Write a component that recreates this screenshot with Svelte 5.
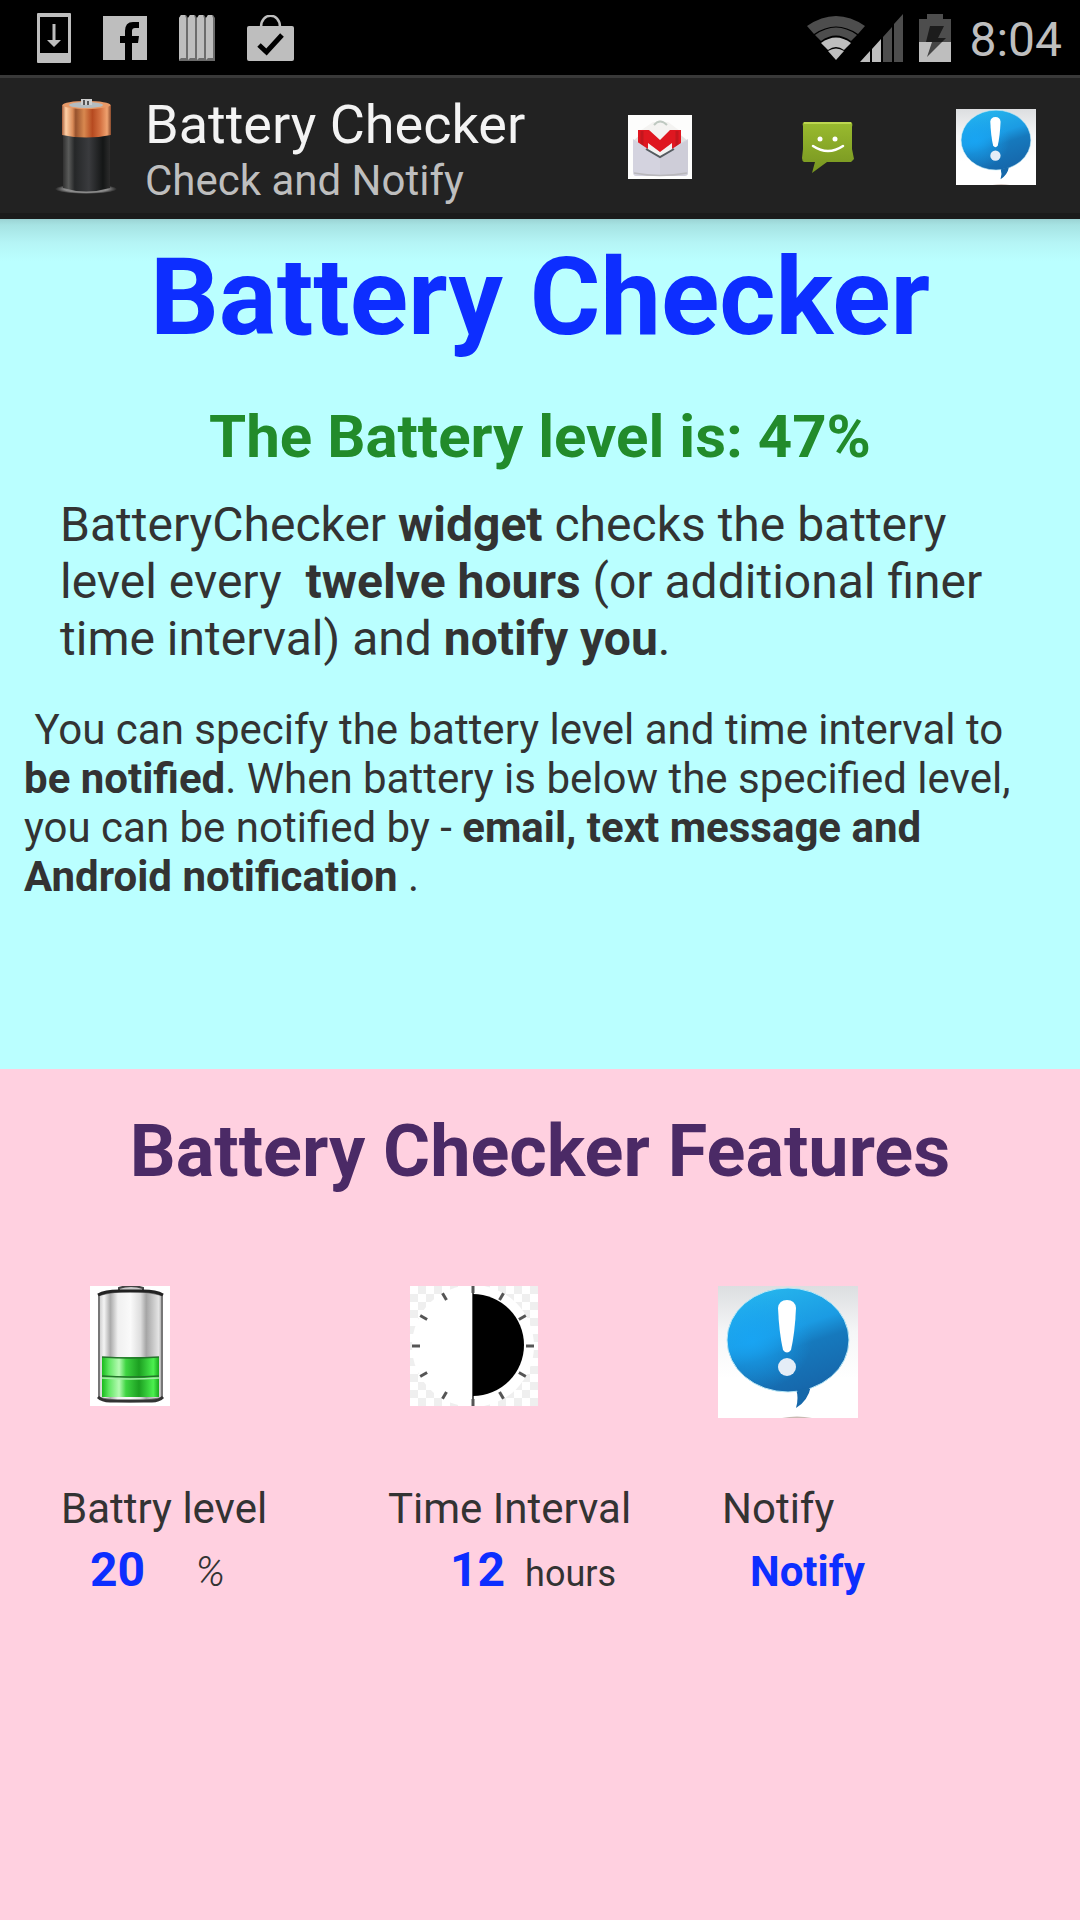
<script>
  const battery = { level: 47, threshold: 20, hours: 12 };
  const ticks = [0, 30, 60, 90, 120, 150, 180, 210, 240, 270, 300, 330];
</script>

{#snippet bubble(id)}
  <svg class="art" viewBox="0 0 140 132" preserveAspectRatio="none" aria-hidden="true">
    <defs>
      <linearGradient id="{id}-bg" x1="0" y1="0" x2="0" y2="1">
        <stop offset="0" stop-color="#dcdee0" /><stop offset=".35" stop-color="#f5f6f7" /><stop offset=".7" stop-color="#fff" />
      </linearGradient>
      <linearGradient id="{id}-fill" x1=".2" y1="0" x2=".6" y2="1">
        <stop offset="0" stop-color="#27b8ee" /><stop offset=".45" stop-color="#1b9be3" /><stop offset=".62" stop-color="#1679bd" /><stop offset="1" stop-color="#1667ab" />
      </linearGradient>
      <radialGradient id="{id}-glow" cx=".2" cy=".5" r=".5">
        <stop offset="0" stop-color="#18a5f4" stop-opacity=".9" /><stop offset="1" stop-color="#18a5f4" stop-opacity="0" />
      </radialGradient>
    </defs>
    <rect width="140" height="132" fill="url(#{id}-bg)" />
    <path d="M78 100 H93 Q90 115 78 122 Q81 112 78 103 Z" fill="#1668aa" />
    <ellipse cx="70" cy="54" rx="61" ry="52" fill="url(#{id}-fill)" stroke="#b9e8f7" stroke-width="1" />
    <ellipse cx="70" cy="54" rx="60" ry="51" fill="url(#{id}-glow)" />
    <path d="M79 104 L92 101 Q89 112 82 117 Z" fill="#1668aa" />
    <path d="M60 22 Q61 14 69 14 Q77 14 78 22 Q77 46 73 64 Q69 69 65 64 Q61 46 60 22 Z" fill="#fff" />
    <circle cx="69" cy="81" r="9" fill="#e4edf7" />
    <path d="M64 132 Q79 129 94 132 Z" fill="#c9b9b2" />
  </svg>
{/snippet}

<div class="screen">
  <header class="status">
    <div class="notices">
      <svg width="34" height="50" viewBox="0 0 34 50" aria-hidden="true">
        <path d="M1 0H33Q34 0 34 1V49Q34 50 33 50H1Q0 50 0 49V1Q0 0 1 0ZM3 4V40H31V4Z" fill="#bebebe" fill-rule="evenodd" />
        <path d="M15.500 11H18.500V27H24L17 34L10 27H15.500Z" fill="#bebebe" />
      </svg>
      <svg width="44" height="44" viewBox="0 0 44 44" aria-hidden="true">
        <path d="M0 0H44V44H29V27H35L36 20H29V15Q29 12 32 12H36V6H30Q22 6 22 15V20H17V27H22V44H0Z" fill="#bebebe" />
      </svg>
      <svg width="36" height="46" viewBox="0 0 36 46" aria-hidden="true">
        {#each [0, 9, 18, 27] as x}
          <path d="M{x} 3L{x + 2} 0H{x + 7}L{x + 9} 3V46H{x}Z" fill="#6c6c6c" />
          <path d="M{x} 3L{x + 2} 0H{x + 6}L{x + 7} 3V43H{x + 2}L{x} 45Z" fill="#bebebe" />
        {/each}
      </svg>
      <svg width="48" height="46" viewBox="0 0 48 46" aria-hidden="true">
        <path d="M14 12C14 -3 33 -3 33 12" fill="none" stroke="#bebebe" stroke-width="2.500" />
        <rect y="11" width="47" height="35" rx="2" fill="#bebebe" />
        <path d="M12 30L19.500 37L35 20" fill="none" stroke="#000" stroke-width="5" />
      </svg>
    </div>
    <div class="system">
      <svg class="wifi" width="58" height="44" viewBox="0 0 58 44" aria-hidden="true">
        <path d="M0 10Q29 -10 58 10L51 18Q29 3 7 18Z" fill="#4d4d4d" />
        <path d="M8 19Q29 4 50 19L44 25Q29 14 14 25Z" fill="#4d4d4d" />
        <path d="M14 27Q29 16 44 27L37 34Q29 28 21 34Z" fill="#bebebe" />
        <path d="M21 35Q29 30 37 35L29 44Z" fill="#bebebe" />
      </svg>
      <svg class="signal" width="43" height="48" viewBox="0 0 43 48" aria-hidden="true">
        <path d="M0 48L10 37V48ZM12 35L21 25V48H12Z" fill="#bebebe" />
        <path d="M23 23L32 13V48H23ZM34 10L43 0V48H34Z" fill="#4d4d4d" />
      </svg>
      <svg class="charge" width="32" height="48" viewBox="0 0 32 48" aria-hidden="true">
        <path d="M8 0H24V5H32V28H0V5H8Z" fill="#4d4d4d" /><path d="M0 28H32V48H0Z" fill="#bebebe" />
        <path d="M11 12H25L19 24H27L23 28H7Z" fill="#1c1c1c" /><path d="M13 28H23L8 43Z" fill="#454545" />
      </svg>
      <time>8:04</time>
    </div>
  </header>

  <nav class="bar">
    <svg class="logo" width="62" height="96" viewBox="0 0 62 96" aria-hidden="true">
      <defs>
        <linearGradient id="copper"><stop offset="0" stop-color="#a75f3c" /><stop offset=".08" stop-color="#ffd0a6" /><stop offset=".22" stop-color="#d98b58" /><stop offset=".28" stop-color="#97522d" /><stop offset=".45" stop-color="#d8884f" /><stop offset=".62" stop-color="#b64a20" /><stop offset=".78" stop-color="#d37040" /><stop offset=".92" stop-color="#efa26f" /><stop offset="1" stop-color="#8a4a2c" /></linearGradient>
        <linearGradient id="dark"><stop offset="0" stop-color="#303030" /><stop offset=".12" stop-color="#5a5b5a" /><stop offset=".25" stop-color="#252728" /><stop offset=".55" stop-color="#3a3b3e" /><stop offset=".85" stop-color="#141616" /><stop offset="1" stop-color="#2c2c2c" /></linearGradient>
        <radialGradient id="floor"><stop offset=".7" stop-color="#8a8a8a" /><stop offset="1" stop-color="#8a8a8a" stop-opacity="0" /></radialGradient>
      </defs>
      <ellipse cx="31" cy="90" rx="31" ry="5" fill="url(#floor)" />
      <path d="M8 36V89Q31 96 55 89V36Z" fill="url(#dark)" />
      <path d="M7 6V36Q31 41 56 36V6Z" fill="url(#copper)" />
      <ellipse cx="31.500" cy="6" rx="24" ry="4" fill="#e79a68" />
      <ellipse cx="31" cy="6" rx="17" ry="3" fill="#b3bcc0" />
      <path d="M26 0H37V6H26Z" fill="#cecfcf" /><path d="M29 1V6M33 2V6" stroke="#555" stroke-width="2" />
    </svg>
    <div class="titles">
      <div class="title">Battery Checker</div>
      <div class="subtitle">Check and Notify</div>
    </div>
    <div class="actions">
      <button class="mail" aria-label="Email">
        <svg class="art" viewBox="0 0 64 64" aria-hidden="true">
          <rect width="64" height="64" fill="#fdfdfc" />
          <path d="M5 26L26 8Q32 3 38 8L60 26L58 60H6Z" fill="#e3e3e1" />
          <path d="M12 16L25 7H40L52 16V30L32 42L12 30Z" fill="#f4f3f1" />
          <path d="M26 10Q32 3 39 10" fill="none" stroke="#bfc9c1" stroke-width="2" />
          <path d="M10 15H21L32 25L42 15H53V33L44 37V28L32 37L20 28V36L10 31Z" fill="#df1720" />
          <path d="M14 16V32M49 16V33" stroke="#a9161c" stroke-width="3" opacity=".5" />
          <path d="M5 24L11 28L32 42L53 28L60 24V58Q60 61 56 61H8Q5 61 5 57Z" fill="#d4d3df" />
          <path d="M32 42L60 25V58Q60 61 56 61H32Z" fill="#cac9d4" opacity=".6" />
          <path d="M18 34L32 42L46 34" fill="none" stroke="#555c60" stroke-width="2" />
          <path d="M6 58Q32 63 59 58" fill="none" stroke="#b9b8bc" stroke-width="1.500" />
        </svg>
      </button>
      <button class="sms" aria-label="Text message">
        <svg class="art" viewBox="0 0 53 52" aria-hidden="true">
          <defs><linearGradient id="lime" x1="0" y1="0" x2="0" y2="1"><stop offset="0" stop-color="#9abb2f" /><stop offset="1" stop-color="#769420" /></linearGradient></defs>
          <path d="M3 1H50Q52 2 51 6V28L53 38L50 41H26L11 52L14 41H3Q1 40 1 37L2 28V5Q1 2 3 1Z" fill="url(#lime)" />
          <path d="M3 2H50" stroke="#bdd650" stroke-width="2" />
          <circle cx="19" cy="18" r="2.500" fill="#fff" /><circle cx="34" cy="18" r="2.500" fill="#fff" />
          <path d="M12 25Q27 35 42 25" fill="none" stroke="#fff" stroke-width="2.500" stroke-linecap="round" />
        </svg>
      </button>
      <button class="alert" aria-label="Notification">{@render bubble('top')}</button>
    </div>
  </nav>

  <main>
    <section class="intro">
      <h1>Battery Checker</h1>
      <p class="level">The Battery level is: {battery.level}%</p>
      <p class="lead">BatteryChecker <b>widget</b> checks the battery level every &nbsp;<b>twelve hours</b> (or additional finer time interval) and <b>notify you</b>.</p>
      <p class="detail">&nbsp;You can specify the battery level and time interval to <b>be notified</b>. When battery is below the specified level, you can be notified by - <b>email, text message and Android notification</b> .</p>
    </section>

    <section class="features">
      <h2>Battery Checker Features</h2>
      <div class="grid">
        <div class="feature">
          <div class="picture cell">
            <svg class="art" viewBox="0 0 80 120" aria-hidden="true">
              <defs>
                <linearGradient id="steel"><stop offset="0" stop-color="#c9c9c9" /><stop offset=".08" stop-color="#f4f4f4" /><stop offset=".18" stop-color="#aaa" /><stop offset=".3" stop-color="#f0f0f0" /><stop offset=".5" stop-color="#fafafa" /><stop offset=".66" stop-color="#ddd" /><stop offset=".75" stop-color="#a5a5a5" /><stop offset=".95" stop-color="#e5e5e5" /><stop offset="1" stop-color="#999" /></linearGradient>
                <linearGradient id="green"><stop offset="0" stop-color="#18bb1c" /><stop offset=".12" stop-color="#5fe661" /><stop offset=".3" stop-color="#b6fbb3" /><stop offset=".42" stop-color="#3fd542" /><stop offset=".65" stop-color="#1c9f21" /><stop offset=".9" stop-color="#4cf04f" /><stop offset="1" stop-color="#19a91d" /></linearGradient>
              </defs>
              <rect width="80" height="120" fill="#fff" />
              <path d="M9 9Q40 1 72 9V112Q40 119 9 112Z" fill="url(#steel)" stroke="#777" stroke-width="2" />
              <path d="M29 5V2Q41 -2 53 2V5Z" fill="#c9c9c9" stroke="#444" stroke-width="2" />
              <path d="M8 9Q15 5 29 5H53Q66 5 73 9" fill="none" stroke="#222" stroke-width="3" />
              <rect x="12" y="71" width="57" height="40" fill="url(#green)" />
              <path d="M12 71Q40 73 69 71M12 90Q40 92 69 90" fill="none" stroke="#23742a" stroke-width="1.500" />
              <path d="M12 92Q40 94 69 92" fill="none" stroke="#a5eca6" stroke-width="1.500" />
              <path d="M8 111Q12 115 20 115H62Q69 115 73 111" fill="none" stroke="#333" stroke-width="3" />
            </svg>
          </div>
          <div class="label">Battry level</div>
          <div class="value"><strong>{battery.threshold}</strong><em>%</em></div>
        </div>
        <div class="feature timing">
          <div class="picture clock">
            <svg class="art" viewBox="0 0 128 120" aria-hidden="true">
              <defs><pattern id="check" width="16" height="16" patternUnits="userSpaceOnUse"><path d="M8 0H16V8H8ZM0 8H8V16H0Z" fill="#efefef" /></pattern></defs>
              <rect width="128" height="120" fill="#fff" /><rect width="128" height="120" fill="url(#check)" />
              <circle cx="63" cy="60" r="61" fill="#fff" />
              <g stroke="#555" stroke-width="3">
                {#each ticks as angle}<path d="M63 -1V7" transform="rotate({angle} 63 60)" />{/each}
                <path d="M63 0V120" stroke-width="2" />
              </g>
              <path d="M63 8A51 51 0 0 1 63 110Z" fill="#000" />
            </svg>
          </div>
          <div class="label">Time Interval</div>
          <div class="value"><strong>{battery.hours}</strong><span>hours</span></div>
        </div>
        <div class="feature notify">
          <div class="picture speech">{@render bubble('feature')}</div>
          <div class="label">Notify</div>
          <div class="value"><button class="link">Notify</button></div>
        </div>
      </div>
    </section>
  </main>
</div>

<style>
  :global(body) { margin: 0; background: #ffd0e0; }
  .screen {
    min-height: 100vh;
    display: flex;
    flex-direction: column;
    font-family: Roboto, sans-serif;
    color: #333;
  }
  button { border: 0; padding: 0; background: none; font: inherit; cursor: pointer; }
  svg { display: block; flex: none; }
  .art { width: 100%; height: 100%; }
  .status {
    height: 75px;
    box-sizing: border-box;
    display: flex;
    align-items: center;
    justify-content: space-between;
    padding: 0 18px 0 37px;
    background: #000;
    color: #bebebe;
  }
  .notices { display: flex; align-items: center; gap: 32px; }
  .system { display: flex; align-items: center; }
  .signal { margin-right: 16px; margin-left: -5px; }
  .charge { margin-right: 18px; }
  time { padding-top: 4px; font-size: 48px; line-height: 60px; }
  .bar {
    height: 144px;
    box-sizing: border-box;
    display: flex;
    align-items: center;
    padding: 2px 44px 0 55px;
    border-top: 3px solid #393939;
    border-bottom: 6px solid #1b1b1b;
    background: #222;
  }
  .titles { padding-top: 8px; margin-left: 28px; flex: 1; white-space: nowrap; }
  .title { font-size: 54px; line-height: 60px; color: #f3f3f3; }
  .subtitle { font-size: 42px; line-height: 52px; color: #bebebe; }
  .actions { display: flex; align-items: center; }
  .mail { width: 64px; height: 64px; margin-right: 109px; }
  .sms { width: 53px; height: 52px; margin-right: 102px; }
  .alert { width: 80px; height: 76px; }
  main { flex: 1; display: flex; flex-direction: column; }
  h1, h2, p { margin: 0; }
  .intro {
    min-height: 850px;
    box-sizing: border-box;
    padding: 14px 24px 24px;
    background: linear-gradient(#9bd3d4, #a6e3e3 6px, #b5f5f6 24px, #baffff 42px);
  }
  h1 { font-size: 108px; line-height: 128px; text-align: center; color: #0d2eff; }
  .level { margin-top: 41px; font-size: 60px; line-height: 70px; font-weight: 700; text-align: center; color: #228b2b; }
  .lead { margin: 24px 36px 0; font-size: 48px; line-height: 57px; }
  .detail { margin-top: 38px; font-size: 42px; line-height: 49px; }
  .features { flex: 1; padding-top: 41px; background: #ffd0e0; }
  h2 { font-size: 72px; line-height: 84px; text-align: center; color: #4b2a66; }
  .grid { display: grid; grid-template-columns: 327fr 330fr 362fr; padding-left: 61px; margin-top: 92px; }
  .picture { height: 120px; }
  .cell { width: 80px; margin-left: 29px; }
  .clock { width: 128px; margin-left: 22px; }
  .speech { width: 140px; height: 132px; }
  .feature { display: grid; grid-template-rows: 198px 50px 68px; white-space: nowrap; }
  .label { font-size: 42px; line-height: 50px; }
  .notify .label { margin-left: 4px; }
  .value { display: flex; align-items: baseline; padding: 7px 0 0 29px; line-height: 58px; font-size: 36px; color: #333; }
  .timing .value { padding-left: 62px; gap: 20px; }
  .notify .value { padding: 9px 0 0 32px; }
  strong { font-size: 48px; color: #0d2eff; }
  em { margin-left: 50px; font-size: 42px; font-weight: 300; }
  .link { font-size: 42px; font-weight: 700; color: #0d2eff; }
</style>
